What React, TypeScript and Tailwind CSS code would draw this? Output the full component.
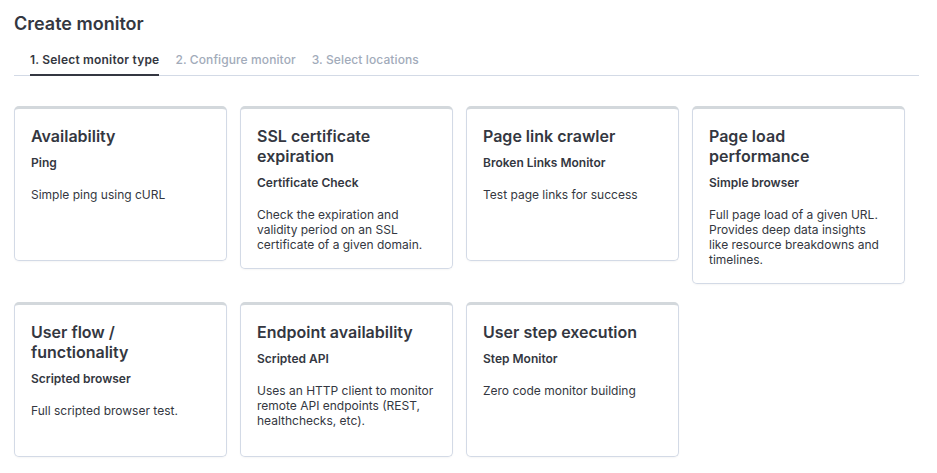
import React from "react";

type Monitor = {
  title: string;
  subtitle: string;
  description: string;
};

const MONITORS: Monitor[] = [
  { title: "Availability", subtitle: "Ping", description: "Simple ping using cURL" },
  {
    title: "SSL certificate expiration",
    subtitle: "Certificate Check",
    description: "Check the expiration and validity period on an SSL certificate of a given domain.",
  },
  { title: "Page link crawler", subtitle: "Broken Links Monitor", description: "Test page links for success" },
  {
    title: "Page load performance",
    subtitle: "Simple browser",
    description: "Full page load of a given URL. Provides deep data insights like resource breakdowns and timelines.",
  },
  { title: "User flow / functionality", subtitle: "Scripted browser", description: "Full scripted browser test." },
  {
    title: "Endpoint availability",
    subtitle: "Scripted API",
    description: "Uses an HTTP client to monitor remote API endpoints (REST, healthchecks, etc).",
  },
  { title: "User step execution", subtitle: "Step Monitor", description: "Zero code monitor building" },
];

const TABS = ["1. Select monitor type", "2. Configure monitor", "3. Select locations"];

const MonitorCard = ({ monitor }: { monitor: Monitor }) => {
  return (
    <div className="w-[213px] min-h-[155px] rounded-[5px] border border-[#d3dae6] border-t-[3px] border-t-[#d3d8dc] bg-white px-4 pt-[17px] pb-[16px] shadow-[0_1px_2px_rgba(0,0,0,0.04)] cursor-pointer">
      <h3 className="text-[16px] leading-[20px] font-semibold text-[#343741] pr-3">{monitor.title}</h3>
      <p className="mt-[9px] text-[12px] leading-[16px] font-semibold text-[#343741]">{monitor.subtitle}</p>
      <p className="mt-[16px] text-[12px] leading-[15px] text-[#343741]">{monitor.description}</p>
    </div>
  );
};

const App = () => {
  return (
    <div className="min-h-screen bg-white pl-[14px] pr-[18px] pt-[12px] font-['Inter',sans-serif] text-[#343741]">
      <h1 className="text-[18px] leading-[24px] font-semibold text-[#343741]">Create monitor</h1>

      <div className="mt-[12px] flex gap-4 border-b border-[#d3dae6] pl-4">
        {TABS.map((tab, i) => (
          <div
            key={tab}
            className={
              i === 0
                ? "border-b-2 border-[#343741] pt-[4px] pb-[6px] text-[12px] leading-[16px] font-semibold text-[#343741] tracking-[0.2px] -mb-px"
                : "border-b-2 border-transparent pt-[4px] pb-[6px] text-[12px] leading-[16px] font-medium text-[#a2abba] tracking-[0.1px] -mb-px"
            }
          >
            {tab}
          </div>
        ))}
      </div>

      <div className="mt-[30px] flex flex-wrap items-start gap-x-[13px] gap-y-[18px]">
        {MONITORS.map((m) => (
          <MonitorCard key={m.title} monitor={m} />
        ))}
      </div>
    </div>
  );
};

export default App;
